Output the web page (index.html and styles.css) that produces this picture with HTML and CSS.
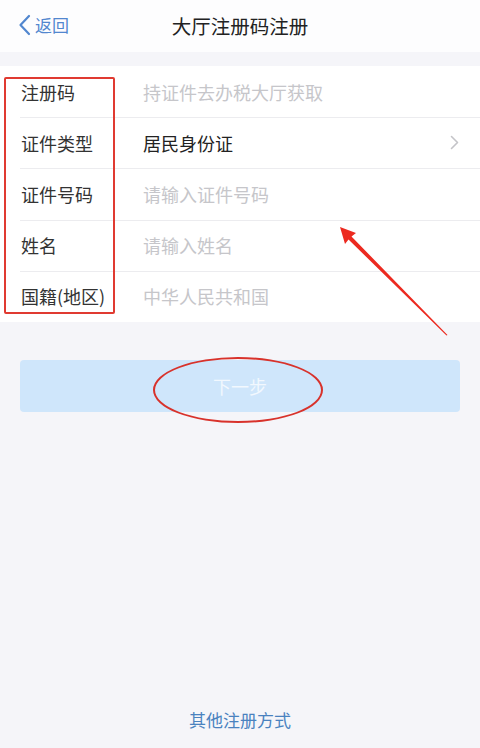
FILE: index.html
```html
<!DOCTYPE html>
<html lang="zh">
<head>
<meta charset="utf-8">
<link rel="stylesheet" href="styles.css">
</head>
<body>
<div class="page">
  <header class="nav">
    <div class="back">
      <svg class="back-icon" width="13" height="22" viewBox="0 0 13 22"><path d="M11 2 L2.5 11 L11 20" fill="none" stroke="#5287cf" stroke-width="2.2" stroke-linecap="round" stroke-linejoin="round"/></svg>
      <span>返回</span>
    </div>
    <div class="title">大厅注册码注册</div>
  </header>

  <section class="form">
    <div class="row"><div class="label">注册码</div><div class="value ph">持证件去办税大厅获取</div></div>
    <div class="row"><div class="label">证件类型</div><div class="value">居民身份证</div>
      <svg class="chev" width="9" height="15" viewBox="0 0 9 15"><path d="M1.5 1.5 L7.5 7.5 L1.5 13.5" fill="none" stroke="#c4c4c8" stroke-width="1.6" stroke-linecap="round" stroke-linejoin="round"/></svg>
    </div>
    <div class="row"><div class="label">证件号码</div><div class="value ph">请输入证件号码</div></div>
    <div class="row"><div class="label">姓名</div><div class="value ph">请输入姓名</div></div>
    <div class="row"><div class="label">国籍(地区)</div><div class="value ph">中华人民共和国</div></div>
  </section>

  <div class="btn-wrap">
    <div class="btn">下一步</div>
  </div>

  <div class="spacer"></div>
  <div class="other">其他注册方式</div>

  <div class="mark-box"></div>
  <div class="mark-ellipse"></div>
  <svg class="mark-arrow" width="480" height="748" viewBox="0 0 480 748">
    <polygon points="340,227 356,233 351.5,236.5 447.5,335 446.5,335.5 348.5,239.5 345,244" fill="#ec2a20"/>
  </svg>
</div>
</body>
</html>
```

FILE: styles.css
```css
* { box-sizing: border-box; margin: 0; padding: 0; }
html, body { width: 480px; height: 748px; overflow: hidden; }
body {
  background: #f5f5f9;
  font-family: "Noto Sans CJK SC", "Noto Sans", sans-serif;
}
.page {
  position: relative;
  width: 480px;
  height: 748px;
  display: flex;
  flex-direction: column;
}
.nav {
  position: relative;
  height: 52px;
  background: #fdfdfe;
  display: flex;
  align-items: center;
  justify-content: center;
}
.back {
  position: absolute;
  left: 18px;
  top: 14px;
  display: flex;
  align-items: center;
  gap: 4px;
  color: #5287cf;
  font-size: 17px;
  line-height: 22px;
}
.title {
  font-size: 19.5px;
  color: #222;
  line-height: 26px;
}
.form {
  margin-top: 14px;
  background: #fff;
}
.row {
  height: 51.2px;
  display: flex;
  align-items: center;
  padding-left: 21px;
  padding-right: 20px;
  position: relative;
}
.row + .row::before {
  content: "";
  position: absolute;
  left: 20px;
  right: 0;
  top: 0;
  height: 1px;
  background: #ececef;
}
.label {
  width: 122px;
  font-size: 18px;
  color: #333;
}
.value {
  flex: 1;
  font-size: 18px;
  color: #222;
}
.value.ph { color: #c6c6ca; }
.chev { margin-right: 1px; }
.btn-wrap {
  padding: 38px 20px 0 20px;
}
.btn {
  height: 52px;
  background: #cfe6fb;
  border-radius: 4px;
  display: flex;
  align-items: center;
  justify-content: center;
  color: #f2f8fe;
  font-size: 18px;
}
.spacer { flex: 1; }
.other {
  text-align: center;
  font-size: 17px;
  color: #4a82bf;
  line-height: 22px;
  padding-bottom: 17px;
}
.mark-box {
  position: absolute;
  left: 4px;
  top: 77px;
  width: 111px;
  height: 237px;
  border: 2px solid #e03a31;
  border-radius: 2px;
}
.mark-ellipse {
  position: absolute;
  left: 153px;
  top: 357px;
  width: 170px;
  height: 66px;
  border: 2px solid #d8322b;
  border-radius: 50%;
}
.mark-arrow {
  position: absolute;
  left: 0;
  top: 0;
  pointer-events: none;
}
```
